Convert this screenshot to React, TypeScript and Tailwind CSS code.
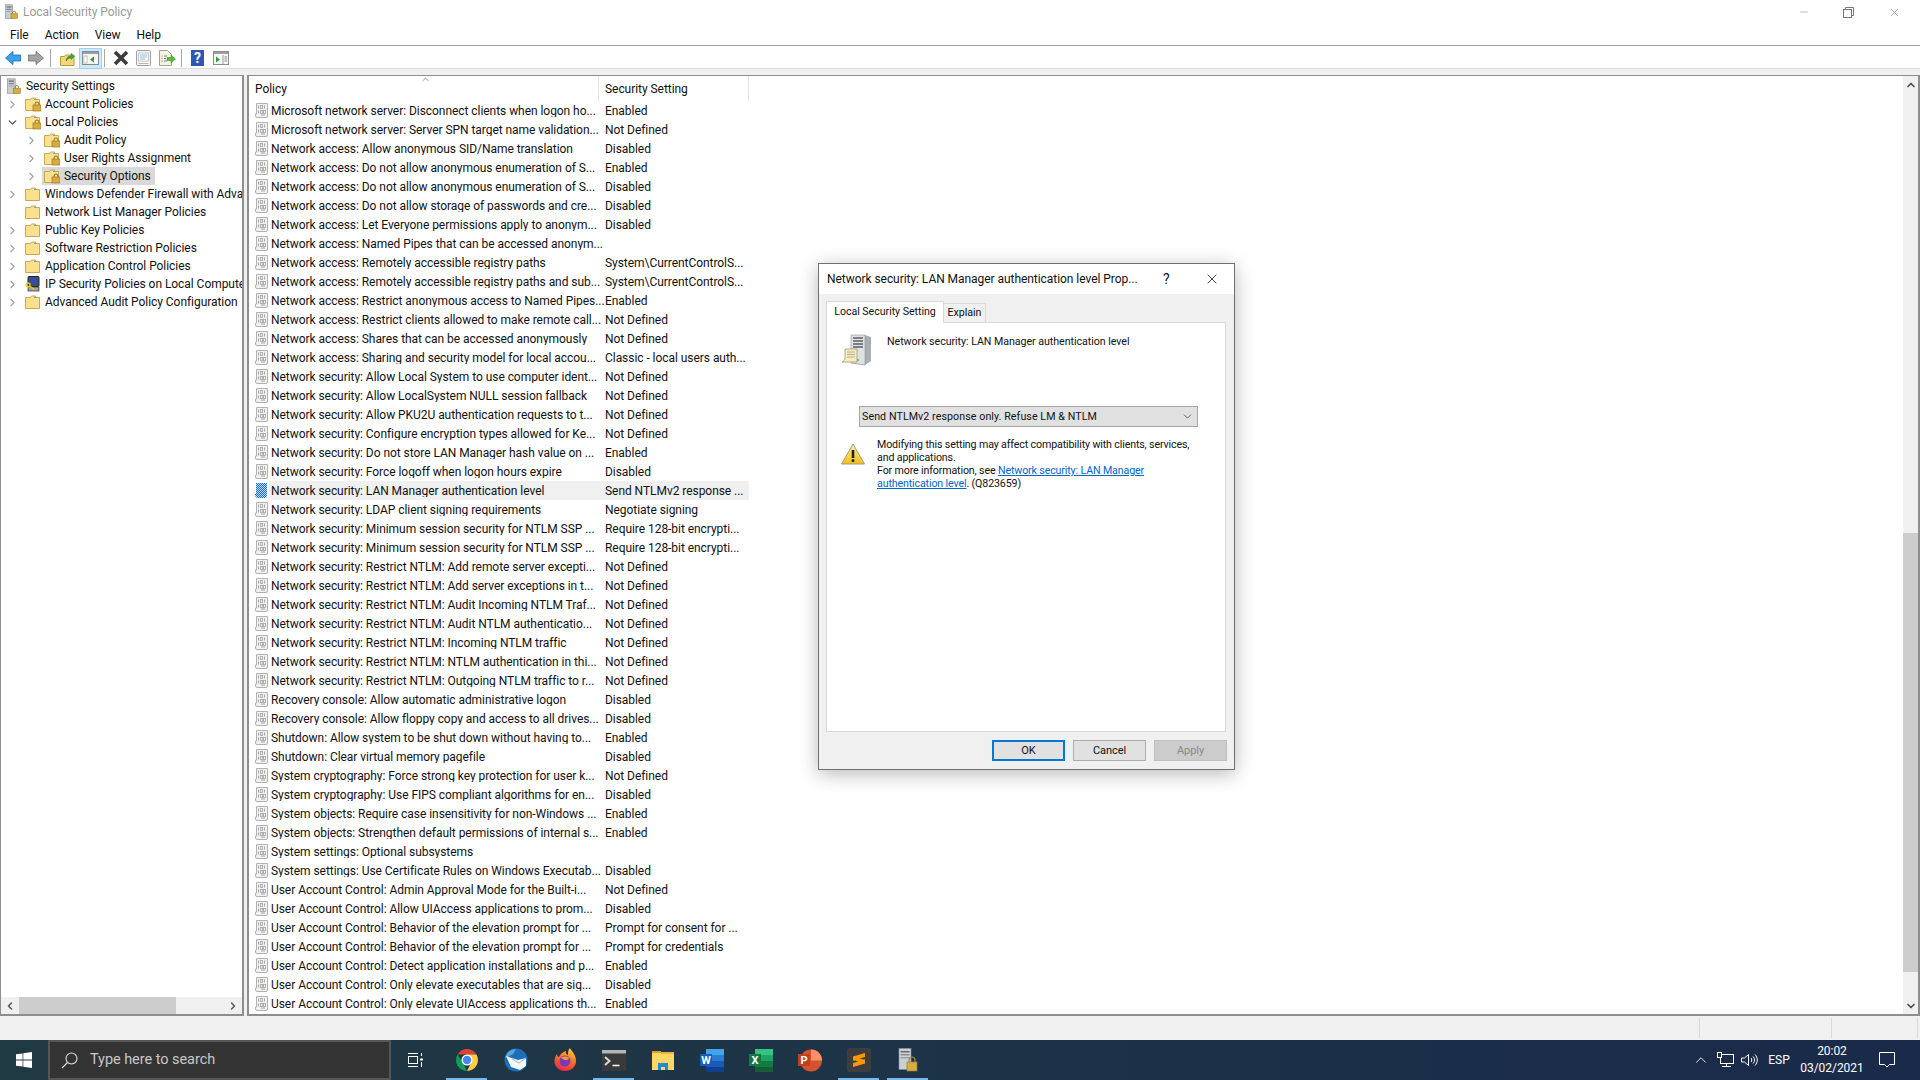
import { ChevronDown, ChevronLeft, ChevronRight, ChevronUp, Minus, X } from 'lucide-react'

const ROWS: [string, string][] = [
  ['Microsoft network server: Disconnect clients when logon ho...', 'Enabled'],
  ['Microsoft network server: Server SPN target name validation...', 'Not Defined'],
  ['Network access: Allow anonymous SID/Name translation', 'Disabled'],
  ['Network access: Do not allow anonymous enumeration of S...', 'Enabled'],
  ['Network access: Do not allow anonymous enumeration of S...', 'Disabled'],
  ['Network access: Do not allow storage of passwords and cre...', 'Disabled'],
  ['Network access: Let Everyone permissions apply to anonym...', 'Disabled'],
  ['Network access: Named Pipes that can be accessed anonym...', ''],
  ['Network access: Remotely accessible registry paths', 'System\\CurrentControlS...'],
  ['Network access: Remotely accessible registry paths and sub...', 'System\\CurrentControlS...'],
  ['Network access: Restrict anonymous access to Named Pipes...', 'Enabled'],
  ['Network access: Restrict clients allowed to make remote call...', 'Not Defined'],
  ['Network access: Shares that can be accessed anonymously', 'Not Defined'],
  ['Network access: Sharing and security model for local accou...', 'Classic - local users auth...'],
  ['Network security: Allow Local System to use computer ident...', 'Not Defined'],
  ['Network security: Allow LocalSystem NULL session fallback', 'Not Defined'],
  ['Network security: Allow PKU2U authentication requests to t...', 'Not Defined'],
  ['Network security: Configure encryption types allowed for Ke...', 'Not Defined'],
  ['Network security: Do not store LAN Manager hash value on ...', 'Enabled'],
  ['Network security: Force logoff when logon hours expire', 'Disabled'],
  ['Network security: LAN Manager authentication level', 'Send NTLMv2 response ...'],
  ['Network security: LDAP client signing requirements', 'Negotiate signing'],
  ['Network security: Minimum session security for NTLM SSP ...', 'Require 128-bit encrypti...'],
  ['Network security: Minimum session security for NTLM SSP ...', 'Require 128-bit encrypti...'],
  ['Network security: Restrict NTLM: Add remote server excepti...', 'Not Defined'],
  ['Network security: Restrict NTLM: Add server exceptions in t...', 'Not Defined'],
  ['Network security: Restrict NTLM: Audit Incoming NTLM Traf...', 'Not Defined'],
  ['Network security: Restrict NTLM: Audit NTLM authenticatio...', 'Not Defined'],
  ['Network security: Restrict NTLM: Incoming NTLM traffic', 'Not Defined'],
  ['Network security: Restrict NTLM: NTLM authentication in thi...', 'Not Defined'],
  ['Network security: Restrict NTLM: Outgoing NTLM traffic to r...', 'Not Defined'],
  ['Recovery console: Allow automatic administrative logon', 'Disabled'],
  ['Recovery console: Allow floppy copy and access to all drives...', 'Disabled'],
  ['Shutdown: Allow system to be shut down without having to...', 'Enabled'],
  ['Shutdown: Clear virtual memory pagefile', 'Disabled'],
  ['System cryptography: Force strong key protection for user k...', 'Not Defined'],
  ['System cryptography: Use FIPS compliant algorithms for en...', 'Disabled'],
  ['System objects: Require case insensitivity for non-Windows ...', 'Enabled'],
  ['System objects: Strengthen default permissions of internal s...', 'Enabled'],
  ['System settings: Optional subsystems', ''],
  ['System settings: Use Certificate Rules on Windows Executab...', 'Disabled'],
  ['User Account Control: Admin Approval Mode for the Built-i...', 'Not Defined'],
  ['User Account Control: Allow UIAccess applications to prom...', 'Disabled'],
  ['User Account Control: Behavior of the elevation prompt for ...', 'Prompt for consent for ...'],
  ['User Account Control: Behavior of the elevation prompt for ...', 'Prompt for credentials'],
  ['User Account Control: Detect application installations and p...', 'Enabled'],
  ['User Account Control: Only elevate executables that are sig...', 'Disabled'],
  ['User Account Control: Only elevate UIAccess applications th...', 'Enabled'],
]

const TREE = [
  { label: 'Account Policies', depth: 1, icon: 'lock', arrow: 'right' },
  { label: 'Local Policies', depth: 1, icon: 'lock', arrow: 'down' },
  { label: 'Audit Policy', depth: 2, icon: 'lock', arrow: 'right' },
  { label: 'User Rights Assignment', depth: 2, icon: 'lock', arrow: 'right' },
  { label: 'Security Options', depth: 2, icon: 'lock', arrow: 'right', selected: true },
  { label: 'Windows Defender Firewall with Advanced Security', depth: 1, icon: 'folder', arrow: 'right' },
  { label: 'Network List Manager Policies', depth: 1, icon: 'folder', arrow: '' },
  { label: 'Public Key Policies', depth: 1, icon: 'folder', arrow: 'right' },
  { label: 'Software Restriction Policies', depth: 1, icon: 'folder', arrow: 'right' },
  { label: 'Application Control Policies', depth: 1, icon: 'folder', arrow: 'right' },
  { label: 'IP Security Policies on Local Computer', depth: 1, icon: 'ip', arrow: 'right' },
  { label: 'Advanced Audit Policy Configuration', depth: 1, icon: 'folder', arrow: 'right' },
]

function Lock({ x, y }: { x: number; y: number }) {
  return (
    <g>
      <path d={`M${x + 2} ${y + 3}v-1a2 2 0 0 1 4 0v1`} fill="none" stroke="#8a6d1f" strokeWidth="1" />
      <rect x={x} y={y + 3} width="8" height="6" fill="#d9ab3c" stroke="#9a7a24" strokeWidth="0.7" />
    </g>
  )
}

function FolderIcon({ lock }: { lock?: boolean }) {
  return (
    <svg width="16" height="16" viewBox="0 0 16 16" className="shrink-0">
      <path d="M0.5 3.5h5l1-1.5h4v1.5h4v11h-14z" fill="#fbe08f" stroke="#c8a850" strokeWidth="1" />
      <rect x="9" y="3" width="2" height="1" fill="#58a6e0" />
      {lock && <Lock x={8} y={6} />}
    </svg>
  )
}

function ServerLockIcon({ size = 20 }: { size?: number }) {
  return (
    <svg width={size} height={size} viewBox="0 0 20 20" className="shrink-0">
      <rect x="3" y="1" width="9" height="17" fill="#c9ced3" stroke="#8b9096" strokeWidth="0.8" />
      <rect x="4.5" y="3" width="6" height="1.4" fill="#5c6268" />
      <rect x="4.5" y="6" width="6" height="1.4" fill="#7c8288" />
      <rect x="4.5" y="9" width="6" height="1" fill="#9a9fa5" />
      <Lock x={10} y={9} />
    </svg>
  )
}

function IpIcon() {
  return (
    <svg width="16" height="16" viewBox="0 0 16 16" className="shrink-0">
      <rect x="3" y="0.5" width="11" height="10" rx="1" fill="#4b4f55" stroke="#222" />
      <rect x="4.5" y="2" width="8" height="6" fill="#2f4fb0" />
      <rect x="3" y="11" width="11" height="4" fill="#9fa3a8" stroke="#333" strokeWidth="0.7" />
      <circle cx="3" cy="9" r="2" fill="none" stroke="#e8d020" strokeWidth="1.3" />
      <path d="M4.5 10l5 3.5" stroke="#e8d020" strokeWidth="1.4" />
    </svg>
  )
}

function PolicyIcon({ active }: { active?: boolean }) {
  if (active) {
    return (
      <svg width="13" height="15" viewBox="0 0 13 15" className="shrink-0">
        <defs>
          <pattern id="dither" width="2" height="2" patternUnits="userSpaceOnUse">
            <rect width="2" height="2" fill="#1f6fd0" />
            <rect width="1" height="1" fill="#bcd8f4" />
            <rect x="1" y="1" width="1" height="1" fill="#bcd8f4" />
          </pattern>
        </defs>
        <path d="M1 0h11v14l-2 1H2l-2-2V11h1z" fill="url(#dither)" />
      </svg>
    )
  }
  return (
    <svg width="13" height="15" viewBox="0 0 13 15" className="shrink-0">
      <path d="M1.5 0.5h11v12.5a1.5 1.5 0 0 1-1.5 1.5H2a1.5 1.5 0 0 1-1.5-1.5V11h1z" fill="#f1f1f1" stroke="#b2b2b2" />
      <path d="M3.5 2.5v3M9.5 2.5v3M3.5 7.5v3M6 12h4" stroke="#a6a6a6" strokeWidth="1" />
      <rect x="5.5" y="2.5" width="2" height="3" fill="none" stroke="#ababab" strokeWidth="0.9" />
      <rect x="5.5" y="7.5" width="2" height="3" fill="none" stroke="#ababab" strokeWidth="0.9" />
      <rect x="8.5" y="7.5" width="2" height="3" fill="none" stroke="#ababab" strokeWidth="0.9" />
    </svg>
  )
}

function Toolbar() {
  return (
    <div className="box-content flex h-[20px] shrink-0 items-center border-t border-b border-t-[#a0a0a0] border-b-[#dcdcdc] pt-[2px] pl-[5px]">
      <svg width="16" height="14" viewBox="0 0 16 14"><path d="M0.5 7L8 0.5v3.5h7.5v6H8v3.5z" fill="#3aa0ea" stroke="#1d6fb8" strokeWidth="0.8" /></svg>
      <svg width="16" height="14" viewBox="0 0 16 14" className="ml-[7px]"><path d="M15.5 7L8 0.5v3.5H0.5v6H8v3.5z" fill="#a4a4a4" stroke="#707070" strokeWidth="0.8" /></svg>
      <div className="ml-[6px] h-[18px] w-px bg-[#a8a8a8]" />
      <svg width="15" height="15" viewBox="0 0 15 15" className="ml-[9px]">
        <path d="M0.5 5.5h4l1-1.5h8.5v10.5h-13.5z" fill="#f4d878" stroke="#b8983c" />
        <path d="M6 10c0-3 2-5 5-5V2.5l3.5 3-3.5 3V7c-2 0-3.5 1-5 3z" fill="#45a83c" stroke="#2a7a24" strokeWidth="0.5" />
      </svg>
      <div className="ml-[4px] flex h-[21px] w-[23px] items-center justify-center border border-[#99d1ff] bg-[#cce8ff]">
        <svg width="17" height="14" viewBox="0 0 17 14">
          <rect x="0.5" y="0.5" width="16" height="13" fill="#f6f6f6" stroke="#8a8a8a" />
          <rect x="1" y="1" width="15" height="2" fill="#9aa0a6" />
          <rect x="2" y="5" width="3" height="7" fill="#fff" stroke="#a0a0a0" strokeWidth="0.6" />
          <path d="M12 5.5v6l-4-3z" fill="#2e9a3a" />
        </svg>
      </div>
      <div className="ml-[2px] h-[18px] w-px bg-[#a8a8a8]" />
      <svg width="16" height="16" viewBox="0 0 16 16" className="ml-[8px]"><path d="M2 2l12 12M14 2L2 14" stroke="#3c3c3c" strokeWidth="3.6" /></svg>
      <svg width="15" height="16" viewBox="0 0 15 16" className="ml-[7px]">
        <rect x="0.5" y="0.5" width="14" height="15" rx="1" fill="#f4f4f4" stroke="#a0a0a0" />
        <rect x="2.5" y="3" width="10" height="8" fill="#fff" stroke="#b0b0b0" strokeWidth="0.7" />
        <path d="M4 5h7M4 7h7M4 9h5" stroke="#7aa8c8" strokeWidth="0.8" />
        <rect x="2.5" y="13" width="10" height="1" fill="#b8b8b8" />
      </svg>
      <svg width="17" height="16" viewBox="0 0 17 16" className="ml-[8px]">
        <path d="M0.5 0.5h8l4 4v11h-12z" fill="#f8f4e4" stroke="#a8a090" />
        <path d="M2.5 6h1M2.5 8.5h1M2.5 11h1M5 6h3M5 8.5h2M5 11h3" stroke="#666" strokeWidth="0.8" />
        <path d="M8 7.5h4V5l4.5 4-4.5 4v-2.5H8z" fill="#5cb83c" stroke="#3c8a24" strokeWidth="0.5" />
      </svg>
      <div className="ml-[5px] h-[18px] w-px bg-[#a8a8a8]" />
      <div className="ml-[9px] flex h-[16px] w-[13px] items-center justify-center bg-[#2f56b0] text-[14px] leading-none font-bold text-white">?</div>
      <svg width="16" height="14" viewBox="0 0 16 14" className="ml-[9px]">
        <rect x="0.5" y="0.5" width="15" height="13" fill="#f6f6f6" stroke="#8a8a8a" />
        <rect x="1" y="1" width="14" height="2" fill="#9aa0a6" />
        <path d="M3 5.5v6l4-3z" fill="#2e9a3a" />
        <path d="M10 4v9" stroke="#a0a0a0" />
        <path d="M11.5 6h2.5M11.5 8h2.5M11.5 10h2.5" stroke="#8a8a8a" />
      </svg>
    </div>
  )
}

function TreePane() {
  return (
    <div className="flex w-[244px] shrink-0 flex-col overflow-hidden border-t border-r-2 border-b-2 border-l border-[#8e8e8e] bg-white">
      <div className="flex-1 overflow-hidden pt-[1px]">
        <div className="flex h-[18px] items-center pl-[4px] whitespace-nowrap">
          <ServerLockIcon size={17} />
          <span className="ml-[4px]">Security Settings</span>
        </div>
        {TREE.map((node) => (
          <div key={node.label} className={`flex h-[18px] items-center whitespace-nowrap ${node.depth === 2 ? 'pl-[19px]' : ''}`}>
            <span className="flex w-[22px] shrink-0 justify-center text-[#a0a0a0]">
              {node.arrow === 'right' && <ChevronRight size={13} strokeWidth={2} />}
              {node.arrow === 'down' && <ChevronDown size={13} strokeWidth={2.5} className="text-[#555]" />}
            </span>
            <span className={`flex h-[18px] items-center pr-[4px] pl-[2px] ${node.selected ? 'bg-[#d9d9d9]' : ''}`}>
              {node.icon === 'ip' ? <IpIcon /> : <FolderIcon lock={node.icon === 'lock'} />}
              <span className="ml-[4px]">{node.label}</span>
            </span>
          </div>
        ))}
      </div>
      <div className="flex h-[17px] items-center bg-[#f0f0f0] text-[#555]">
        <div className="flex w-[18px] justify-center"><ChevronLeft size={12} strokeWidth={3} /></div>
        <div className="h-full w-[157px] bg-[#cdcdcd]" />
        <div className="ml-auto flex w-[18px] justify-center"><ChevronRight size={12} strokeWidth={3} /></div>
      </div>
    </div>
  )
}

function ListPane() {
  return (
    <div className="relative flex min-w-0 flex-1 overflow-hidden border-t border-r-2 border-b-2 border-l-2 border-[#8e8e8e] bg-white">
      <div className="min-w-0 flex-1">
        <div className="relative flex h-[25px] items-center">
          <ChevronUp size={11} className="absolute top-[-2px] left-[171px] text-[#9a9a9a]" />
          <div className="flex h-full w-[350px] items-center border-r border-[#e5e5e5] pl-[6px]">Policy</div>
          <div className="flex h-full w-[150px] items-center border-r border-[#e5e5e5] pl-[6px]">Security Setting</div>
        </div>
        {ROWS.map(([name, value], i) => {
          const active = i === 20
          return (
            <div key={i} className="flex h-[19px] items-center whitespace-nowrap">
              <span className="flex w-[20px] shrink-0 justify-end pr-[1px]"><PolicyIcon active={active} /></span>
              <div className={`flex h-full w-[480px] items-center ${active ? 'bg-[#f0f0f0]' : ''}`}>
                <span className="w-[336px] shrink-0 overflow-hidden pl-[2px]">{name}</span>
                <span>{value}</span>
              </div>
            </div>
          )
        })}
      </div>
      <div className="flex w-[15px] shrink-0 flex-col items-center bg-[#f0f0f0] text-[#505050]">
        <div className="flex h-[17px] items-center"><ChevronUp size={12} strokeWidth={3.5} /></div>
        <div className="mt-[440px] h-[439px] w-full bg-[#cdcdcd]" />
        <div className="mt-auto flex h-[17px] items-center"><ChevronDown size={12} strokeWidth={3.5} /></div>
      </div>
    </div>
  )
}

function WarningIcon() {
  return (
    <svg width="24" height="22" viewBox="0 0 24 22" className="shrink-0">
      <defs>
        <linearGradient id="warn" x1="0" y1="0" x2="0" y2="1">
          <stop offset="0" stopColor="#fff3a0" />
          <stop offset="1" stopColor="#f2bd10" />
        </linearGradient>
      </defs>
      <path d="M12 1L23.5 21H0.5z" fill="url(#warn)" stroke="#a09a88" strokeLinejoin="round" />
      <rect x="10.7" y="7" width="2.6" height="8" fill="#222" />
      <rect x="10.7" y="16.3" width="2.6" height="2.6" fill="#222" />
    </svg>
  )
}

function ServerDocIcon() {
  return (
    <svg width="31" height="32" viewBox="0 0 31 32">
      <path d="M10 1h14l6 2v24l-6 4-14-2z" fill="#a9aeb3" />
      <path d="M10 1h14v30l-14-2z" fill="#dfe2e5" stroke="#8c9096" strokeWidth="0.6" />
      <path d="M12 4h10M12 7h10M12 10h10M12 13h10" stroke="#5b6066" strokeWidth="1.4" />
      <circle cx="17" cy="26" r="1" fill="#58b848" />
      <path d="M4 15h12v13H1c2-1 3-2 3-4z" fill="#f6ecc4" stroke="#a39a70" strokeWidth="0.8" />
      <path d="M6 18h8M6 20.5h8M6 23h8" stroke="#a89f80" strokeWidth="0.8" />
    </svg>
  )
}

function DialogButton({ children, primary, disabled }: { children: string; primary?: boolean; disabled?: boolean }) {
  return (
    <button
      type="button"
      className={`h-[21px] w-[73px] text-[11px] leading-none ${
        primary
          ? 'border-2 border-[#0078d7] bg-[#e1e1e1]'
          : disabled
            ? 'border border-[#bfbfbf] bg-[#cccccc] text-[#8a8a8a]'
            : 'border border-[#adadad] bg-[#e1e1e1]'
      }`}
    >
      {children}
    </button>
  )
}

// floating properties window
function PropertiesDialog() {
  return (
    <div className="absolute top-[263px] left-[818px] flex h-[507px] w-[417px] flex-col border border-[#707070] bg-[#f0f0f0] shadow-[0_4px_18px_rgba(0,0,0,0.28)]">
      <div className="relative flex h-[30px] shrink-0 items-center bg-white pl-[8px] whitespace-nowrap">
        Network security: LAN Manager authentication level Prop...
        <span className="absolute left-[344px] text-[14px]">?</span>
        <X size={16} strokeWidth={1.2} className="absolute left-[385px]" />
      </div>
      <div className="relative flex flex-1 flex-col px-[7px] pt-[7px]">
        <div className="flex h-[21px] items-end text-[10.67px]">
          <div className="relative z-10 mb-[-1px] flex h-[22px] w-[118px] items-center justify-center border border-b-0 border-[#d9d9d9] bg-white">Local Security Setting</div>
          <div className="flex h-[19px] w-[42px] items-center justify-center border-t border-r border-[#d9d9d9] bg-[#f0f0f0]">Explain</div>
        </div>
        <div className="h-[410px] w-[400px] border border-[#d9d9d9] bg-white pt-[11px] pr-[16px] pl-[14px] text-[10.67px] leading-[13px]">
          <div className="flex">
            <ServerDocIcon />
            <span className="mt-[1px] ml-[15px] whitespace-nowrap">Network security: LAN Manager authentication level</span>
          </div>
          <div className="mt-[40px] ml-[18px] flex h-[21px] w-[339px] items-center justify-between border border-[#a6a6a6] bg-[#e1e1e1] pr-[3px] pl-[2px] tracking-[0.08px]">
            <span>Send NTLMv2 response only. Refuse LM &amp; NTLM</span>
            <ChevronDown size={13} strokeWidth={1.5} className="text-[#444]" />
          </div>
          <div className="mt-[11px] flex">
            <div className="mt-[5px] shrink-0"><WarningIcon /></div>
            <p className="ml-[12px] w-[330px] tracking-[-0.14px]">
              Modifying this setting may affect compatibility with clients, services, and applications.
              <br />
              For more information, see{' '}
              <span className="text-[#0066cc] underline">Network security: LAN Manager authentication level</span>. (Q823659)
            </p>
          </div>
        </div>
        <div className="mt-[8px] flex justify-end gap-[8px]">
          <DialogButton primary>OK</DialogButton>
          <DialogButton>Cancel</DialogButton>
          <DialogButton disabled>Apply</DialogButton>
        </div>
      </div>
    </div>
  )
}

const AppIcons = [
  <svg key="chrome" width="24" height="24" viewBox="0 0 24 24">
    <path d="M2.5 6.5A11 11 0 0 1 21.5 6.5H12z" fill="#db4437" />
    <path d="M2.5 6.5L8 15l4 8A11 11 0 0 1 2.5 6.5z" fill="#0f9d58" />
    <path d="M21.5 6.5A11 11 0 0 1 12 23l4-8-4-8.5z" fill="#ffcd40" />
    <circle cx="12" cy="12" r="5.5" fill="#fff" />
    <circle cx="12" cy="12" r="4.2" fill="#4285f4" />
  </svg>,
  <svg key="thunderbird" width="24" height="24" viewBox="0 0 24 24">
    <circle cx="12" cy="12" r="11.5" fill="#1f6fb8" />
    <path d="M12 1A11.5 11.5 0 0 0 1 10l8-4z" fill="#5aa7dc" />
    <path d="M2 8l12 4 8-2v8l-6 4-9-3z" fill="#f4f6fa" />
    <path d="M8 11l7 4 7-5" fill="none" stroke="#9fb4cc" />
  </svg>,
  <svg key="firefox" width="24" height="24" viewBox="0 0 24 24">
    <defs>
      <linearGradient id="ff" x1="0.7" y1="0" x2="0.3" y2="1">
        <stop offset="0" stopColor="#ffd23a" />
        <stop offset="0.5" stopColor="#ff6a2b" />
        <stop offset="1" stopColor="#e5264f" />
      </linearGradient>
    </defs>
    <path d="M12 23C5 23 1 18 1.5 12 2 9 3 7 4 6c0 2 1 3 2 3 1-3 4-5 7-6 0 0-1 3 2 4 0-3 0-5 2-7 1 3 6 6 6 13 0 6-5 10-11 10z" fill="url(#ff)" />
    <circle cx="12" cy="13" r="5.5" fill="#7a3bb8" />
    <path d="M8 10c2-2 6-2 8 0-1 3-5 2-6 1z" fill="#ff9a2b" />
  </svg>,
  <svg key="terminal" width="24" height="21" viewBox="0 0 24 21">
    <rect width="24" height="21" fill="#3a3a3a" />
    <rect width="24" height="3.5" fill="#b5b5b5" />
    <path d="M3 7l4.5 4L3 15" fill="none" stroke="#d8d8d8" strokeWidth="2" />
    <path d="M10.5 15.5h7" stroke="#f0f0f0" strokeWidth="1.6" />
  </svg>,
  <svg key="explorer" width="22" height="19" viewBox="0 0 22 19">
    <path d="M0 0h9v2H0z" fill="#d9a520" />
    <rect y="2" width="22" height="17" fill="#ffd766" />
    <rect x="9" y="1" width="13" height="2" fill="#e8b83a" />
    <path d="M6 19v-7h10v7h-3v-3H9v3z" fill="#1f8ad8" />
  </svg>,
  <svg key="word" width="24" height="23" viewBox="0 0 24 23">
    <rect x="6" width="18" height="6" fill="#41a5ee" />
    <rect x="6" y="6" width="18" height="6" fill="#2b7cd3" />
    <rect x="6" y="12" width="18" height="6" fill="#185abd" />
    <rect x="6" y="18" width="18" height="5" fill="#103f91" />
    <rect y="5" width="12" height="12" fill="#185abd" />
    <text x="6" y="15" textAnchor="middle" fontSize="11" fontWeight="700" fill="#fff" fontFamily="Roboto">W</text>
  </svg>,
  <svg key="excel" width="24" height="23" viewBox="0 0 24 23">
    <rect x="6" width="18" height="6" fill="#33c481" />
    <rect x="6" y="6" width="18" height="6" fill="#21a366" />
    <rect x="6" y="12" width="18" height="6" fill="#107c41" />
    <rect x="6" y="18" width="18" height="5" fill="#185c37" />
    <rect y="5" width="12" height="12" fill="#107c41" />
    <text x="6" y="15" textAnchor="middle" fontSize="11" fontWeight="700" fill="#fff" fontFamily="Roboto">X</text>
  </svg>,
  <svg key="powerpoint" width="24" height="23" viewBox="0 0 24 23">
    <circle cx="13" cy="11.5" r="11" fill="#d35230" />
    <path d="M13 .5A11 11 0 0 1 24 11.5H13z" fill="#ff8f6b" />
    <rect y="5" width="12" height="12" fill="#c43e1c" />
    <text x="6" y="15" textAnchor="middle" fontSize="11" fontWeight="700" fill="#fff" fontFamily="Roboto">P</text>
  </svg>,
  <svg key="sublime" width="24" height="24" viewBox="0 0 24 24">
    <rect width="24" height="24" rx="2" fill="#3d3d3d" />
    <path d="M6 8.5L18 5v4L6 12.5zM6 8.5L18 12v3.5L6 12zM6 15L18 11.5v4L6 19z" fill="#ff9800" />
  </svg>,
  <svg key="policy" width="20" height="24" viewBox="0 0 20 24">
    <rect x="1" y="0.5" width="12" height="21" fill="#ccd0d4" stroke="#8e9298" strokeWidth="0.6" />
    <rect x="2.5" y="3" width="9" height="1.4" fill="#626870" />
    <rect x="2.5" y="6" width="9" height="1.4" fill="#848a90" />
    <rect x="2.5" y="9" width="9" height="1.4" fill="#9a9fa5" />
    <path d="M11 14v-2a3 3 0 0 1 6 0v2" fill="none" stroke="#a88a38" strokeWidth="1.2" />
    <rect x="9" y="14" width="10" height="9" fill="#d7ab45" stroke="#a07f28" strokeWidth="0.7" />
  </svg>,
]

const RUNNING = [0, 3, 8, 9]

function Taskbar() {
  return (
    <div className="flex h-[40px] shrink-0 bg-gradient-to-r from-[#203a43] to-[#1a2a4a] text-white">
      <div className="flex w-[48px] items-center justify-center">
        <svg width="16" height="16" viewBox="0 0 16 16" fill="#fff">
          <path d="M0 2.3l6.6-.9v6.2H0zM7.3 1.300L16 0v7.600H7.300zM0 8.400h6.600v6.200L0 13.700zM7.300 8.400H16V16l-8.700-1.200z" />
        </svg>
      </div>
      <div className="flex w-[343px] items-center border-2 border-[#565656] bg-[#333333] pl-[11px] text-[14.5px] text-[#c8c8c8]">
        <svg width="17" height="17" viewBox="0 0 17 17" fill="none" stroke="#e0e0e0" strokeWidth="1.1">
          <circle cx="10.5" cy="6.5" r="5.5" />
          <path d="M6.5 10.5L1 16" />
        </svg>
        <span className="mt-[1px] ml-[12px]">Type here to search</span>
      </div>
      <div className="flex w-[48px] items-center justify-center">
        <svg width="16" height="16" viewBox="0 0 16 16" fill="none" stroke="#fff" strokeWidth="1">
          <path d="M1 1.5h10M1 14.5h10" />
          <rect x="1.5" y="4.5" width="9" height="7" />
          <path d="M14.5 1v3M14.5 10v5" />
          <rect x="13" y="6.5" width="3" height="2" fill="#fff" stroke="none" />
        </svg>
      </div>
      <div className="ml-[3px] flex">
        {AppIcons.map((icon, i) => (
          <div key={i} className="relative flex w-[49px] items-center justify-center">
            {icon}
            {RUNNING.includes(i) && <div className="absolute right-[4px] bottom-0 left-[4px] h-[2px] bg-[#76b9ed]" />}
          </div>
        ))}
      </div>
      <div className="ml-auto flex pr-[13px] text-[12px]">
        <div className="flex w-[24px] items-center justify-center"><ChevronUp size={18} strokeWidth={1.2} /></div>
        <div className="flex w-[24px] items-center justify-center">
          <svg width="17" height="16" viewBox="0 0 17 16" fill="none" stroke="#fff" strokeWidth="1">
            <rect x="3.5" y="2.5" width="13" height="9" />
            <rect x="0.5" y="0.5" width="4" height="5" fill="#1c2f48" />
            <path d="M9.5 11.5v3M5 14.5h9" />
          </svg>
        </div>
        <div className="flex w-[24px] items-center justify-center">
          <svg width="17" height="14" viewBox="0 0 17 14" fill="none" stroke="#fff" strokeWidth="1">
            <path d="M0.5 5v4h3l4 3.5v-11L3.5 5z" />
            <path d="M10 5c1 1 1 3 0 4M12 3.5c2 2 2 5 0 7M14 1.5c3 3 3 8 0 11" />
          </svg>
        </div>
        <div className="flex w-[36px] items-center justify-center">ESP</div>
        <div className="flex w-[70px] flex-col items-center justify-center leading-[17px]">
          <span>20:02</span>
          <span>03/02/2021</span>
        </div>
        <div className="flex w-[40px] items-center justify-center">
          <svg width="16" height="16" viewBox="0 0 16 16" fill="none" stroke="#fff" strokeWidth="1">
            <path d="M0.5 0.5h15v12h-5l-2.5 2.500-2.500-2.500h-5z" />
          </svg>
        </div>
      </div>
    </div>
  )
}

export default function App() {
  return (
    <div className="relative flex h-[1080px] w-[1920px] flex-col overflow-hidden bg-white font-[family-name:Roboto,sans-serif] text-[12px] leading-none tracking-[-0.05px] text-[#111]">
      <div className="relative flex h-[24px] shrink-0 items-center pl-[3px] text-[#9a9a9a]">
        <ServerLockIcon size={16} />
        <span className="ml-[4px]">Local Security Policy</span>
        <div className="ml-auto flex items-center text-[#777]">
          <Minus size={12} strokeWidth={1} />
          <svg width="11" height="11" viewBox="0 0 11 11" fill="none" stroke="#777" className="ml-[33px]">
            <path d="M2.5 2.5v-2h8v8h-2" />
            <rect x="0.5" y="2.5" width="8" height="8" />
          </svg>
          <X size={13} strokeWidth={1} className="mr-[19px] ml-[34px]" />
        </div>
      </div>
      <div className="flex h-[21px] shrink-0 items-center gap-[16px] pl-[10px]">
        <span>File</span>
        <span>Action</span>
        <span>View</span>
        <span>Help</span>
      </div>
      <Toolbar />
      <div className="flex min-h-0 flex-1 gap-[3px] bg-[#f0f0f0] pt-[6px]">
        <TreePane />
        <ListPane />
      </div>
      <div className="flex h-[24px] shrink-0 justify-end bg-[#f0f0f0] py-[2px] pr-[2px]">
        <div className="mr-[85px] w-[133px] border-r border-l border-[#d9d9d9]" />
        <div className="w-px bg-[#d9d9d9]" />
      </div>
      <Taskbar />
      <PropertiesDialog />
    </div>
  )
}
